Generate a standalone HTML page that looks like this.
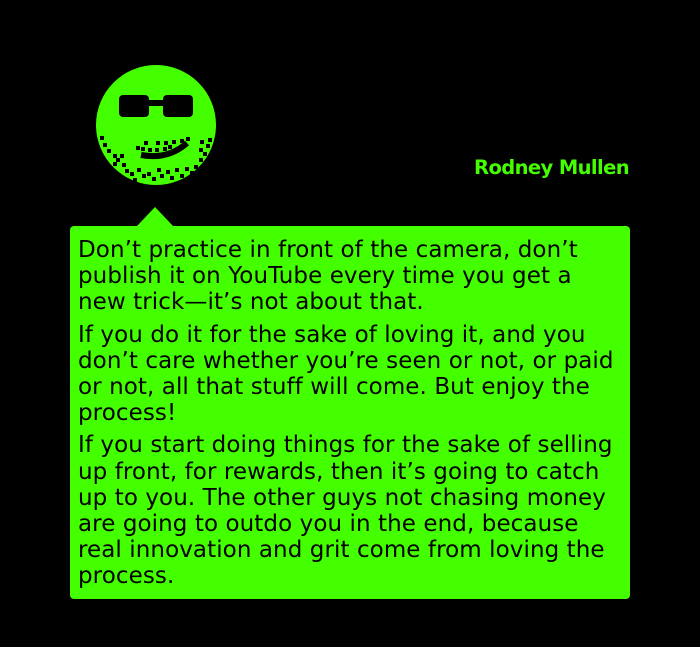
<!DOCTYPE html>
<html><head><style>
body{margin:0;width:700px;height:647px;background:#000;position:relative;overflow:hidden;font-family:"DejaVu Sans","Liberation Sans",sans-serif}
.name{position:absolute;right:71px;top:156px;color:#44ff00;font-weight:bold;font-size:19.5px;letter-spacing:-0.6px}
.bub{position:absolute;left:70px;top:226px;width:560px;height:373px;background:#44ff00;border-radius:4px}
.tri{position:absolute;left:137px;top:207px;width:0;height:0;border-left:18px solid transparent;border-right:18px solid transparent;border-bottom:19px solid #44ff00}
.txt{position:absolute;left:78px;top:237px;font-size:23px;line-height:26.2px;color:#000;white-space:nowrap;letter-spacing:0.08px}
.txt p{margin:0 0 6px 0}
</style></head><body>
<svg width="700" height="230" style="position:absolute;left:0;top:0">
<circle cx="156" cy="125" r="60" fill="#44ff00"/>
<rect x="119" y="95" width="30" height="22" rx="4" fill="#000"/>
<rect x="163" y="95" width="30" height="22" rx="4" fill="#000"/>
<rect x="145" y="100" width="22" height="6" fill="#000"/>
<path d="M141 155 Q168 160 187 143" stroke="#000" stroke-width="6" fill="none"/>
<g fill="#000">
<rect x="100" y="136" width="4" height="4"/><rect x="103" y="143" width="4" height="4"/><rect x="107" y="149" width="4" height="4"/><rect x="113" y="154" width="4" height="4"/><rect x="120" y="154" width="4" height="4"/><rect x="113" y="162" width="4" height="4"/><rect x="122" y="163" width="4" height="4"/><rect x="125" y="169" width="4" height="4"/><rect x="130" y="172" width="4" height="4"/><rect x="137" y="168" width="4" height="4"/><rect x="142" y="174" width="4" height="4"/><rect x="147" y="172" width="4" height="4"/><rect x="152" y="177" width="4" height="4"/><rect x="157" y="168" width="4" height="4"/><rect x="160" y="174" width="4" height="4"/><rect x="166" y="170" width="4" height="4"/><rect x="170" y="176" width="4" height="4"/><rect x="175" y="168" width="4" height="4"/><rect x="180" y="174" width="4" height="4"/><rect x="185" y="167" width="4" height="4"/><rect x="190" y="171" width="4" height="4"/><rect x="194" y="165" width="4" height="4"/><rect x="199" y="158" width="4" height="4"/><rect x="203" y="152" width="4" height="4"/><rect x="199" y="148" width="4" height="4"/><rect x="206" y="144" width="4" height="4"/><rect x="200" y="140" width="4" height="4"/><rect x="208" y="138" width="4" height="4"/><rect x="186" y="137" width="4" height="4"/><rect x="180" y="139" width="4" height="4"/><rect x="172" y="140" width="4" height="4"/><rect x="164" y="141" width="4" height="4"/><rect x="156" y="141" width="4" height="4"/><rect x="144" y="141" width="4" height="4"/><rect x="136" y="146" width="4" height="4"/><rect x="141" y="147" width="4" height="4"/><rect x="148" y="148" width="4" height="4"/><rect x="155" y="148" width="4" height="4"/><rect x="163" y="147" width="4" height="4"/><rect x="168" y="145" width="4" height="4"/><rect x="116" y="158" width="4" height="4"/><rect x="186" y="178" width="4" height="4"/><rect x="133" y="178" width="4" height="4"/>
</g>
</svg>
<div class="name">Rodney Mullen</div>
<div class="tri"></div>
<div class="bub"></div>
<div class="txt">
<p>Don’t practice in front of the camera, don’t<br>publish it on YouTube every time you get a<br>new trick—it’s not about that.</p>
<p>If you do it for the sake of loving it, and you<br>don’t care whether you’re seen or not, or paid<br>or not, all that stuff will come. But enjoy the<br>process!</p>
<p>If you start doing things for the sake of selling<br>up front, for rewards, then it’s going to catch<br>up to you. The other guys not chasing money<br>are going to outdo you in the end, because<br>real innovation and grit come from loving the<br>process.</p>
</div>
</body></html>
